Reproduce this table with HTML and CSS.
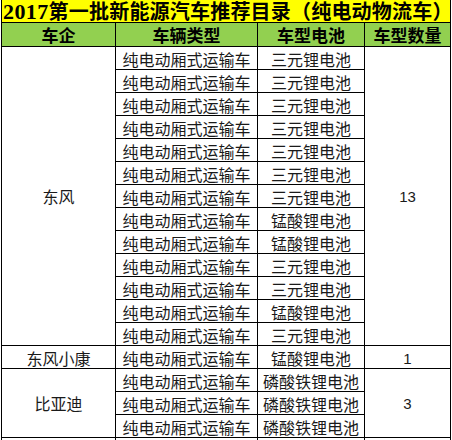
FILE: index.html
```html
<!DOCTYPE html>
<html lang="zh">
<head>
<meta charset="utf-8">
<link rel="stylesheet" href="styles.css">
</head>
<body>
<div class="sheet">
  <div class="title"><span class="num">2017</span>第一批新能源汽车推荐目录（纯电动物流车）</div>
  <div class="hd">车企</div>
  <div class="hd">车辆类型</div>
  <div class="hd">车型电池</div>
  <div class="hd">车型数量</div>

  <div class="c mid r13">东风</div>
  <div class="c">纯电动厢式运输车</div><div class="c">三元锂电池</div>
  <div class="c mid r13 n">13</div>
  <div class="c">纯电动厢式运输车</div><div class="c">三元锂电池</div>
  <div class="c">纯电动厢式运输车</div><div class="c">三元锂电池</div>
  <div class="c">纯电动厢式运输车</div><div class="c">三元锂电池</div>
  <div class="c">纯电动厢式运输车</div><div class="c">三元锂电池</div>
  <div class="c">纯电动厢式运输车</div><div class="c">三元锂电池</div>
  <div class="c">纯电动厢式运输车</div><div class="c">三元锂电池</div>
  <div class="c">纯电动厢式运输车</div><div class="c">锰酸锂电池</div>
  <div class="c">纯电动厢式运输车</div><div class="c">锰酸锂电池</div>
  <div class="c">纯电动厢式运输车</div><div class="c">三元锂电池</div>
  <div class="c">纯电动厢式运输车</div><div class="c">三元锂电池</div>
  <div class="c">纯电动厢式运输车</div><div class="c">锰酸锂电池</div>
  <div class="c">纯电动厢式运输车</div><div class="c">三元锂电池</div>

  <div class="c">东风小康</div>
  <div class="c">纯电动厢式运输车</div><div class="c">锰酸锂电池</div>
  <div class="c n">1</div>

  <div class="c mid r3">比亚迪</div>
  <div class="c">纯电动厢式运输车</div><div class="c">磷酸铁锂电池</div>
  <div class="c mid r3 n">3</div>
  <div class="c">纯电动厢式运输车</div><div class="c">磷酸铁锂电池</div>
  <div class="c">纯电动厢式运输车</div><div class="c">磷酸铁锂电池</div>

  <div class="c tail"></div>
  <div class="c tail"></div><div class="c tail"></div>
  <div class="c tail"></div>
</div>
</body>
</html>
```

FILE: styles.css
```css
html, body {
  margin: 0;
  padding: 0;
  overflow: hidden;
  background: #ffffff;
}
body {
  width: 452px;
  height: 440px;
  font-family: "Noto Sans CJK SC", "Noto Sans", sans-serif;
}
.sheet {
  margin-left: 1px;
  width: 450px;
  box-sizing: border-box;
  padding: 0 1px 1px 1px;
  background: #000000;
  display: grid;
  grid-template-columns: 113px 141px 106px 85px;
  grid-template-rows: 22px 23px;
  grid-auto-rows: 22px;
  gap: 1px;
}
.title {
  grid-column: 1 / -1;
  background: #ffff00;
  color: #000;
  font-weight: bold;
  font-size: 20px;
  line-height: 22px;
  padding-left: 1px;
  letter-spacing: 0.2px;
  white-space: nowrap;
}
.title .num {
  font-family: "Liberation Serif", serif;
  font-size: 22px;
  letter-spacing: 0.4px;
}
.hd {
  background: #92d050;
  color: #000;
  font-weight: bold;
  font-size: 17px;
  line-height: 22px;
  display: flex;
  align-items: center;
  justify-content: center;
  white-space: nowrap;
}
.c {
  background: #ffffff;
  color: #1a1a1a;
  font-size: 16px;
  line-height: 19px;
  display: flex;
  align-items: flex-end;
  justify-content: center;
  white-space: nowrap;
}
.c.mid {
  align-items: center;
}
.r13 {
  grid-row: span 13;
}
.r3 {
  grid-row: span 3;
}
.n {
  font-family: "Liberation Sans", sans-serif;
  font-size: 15px;
}
```
